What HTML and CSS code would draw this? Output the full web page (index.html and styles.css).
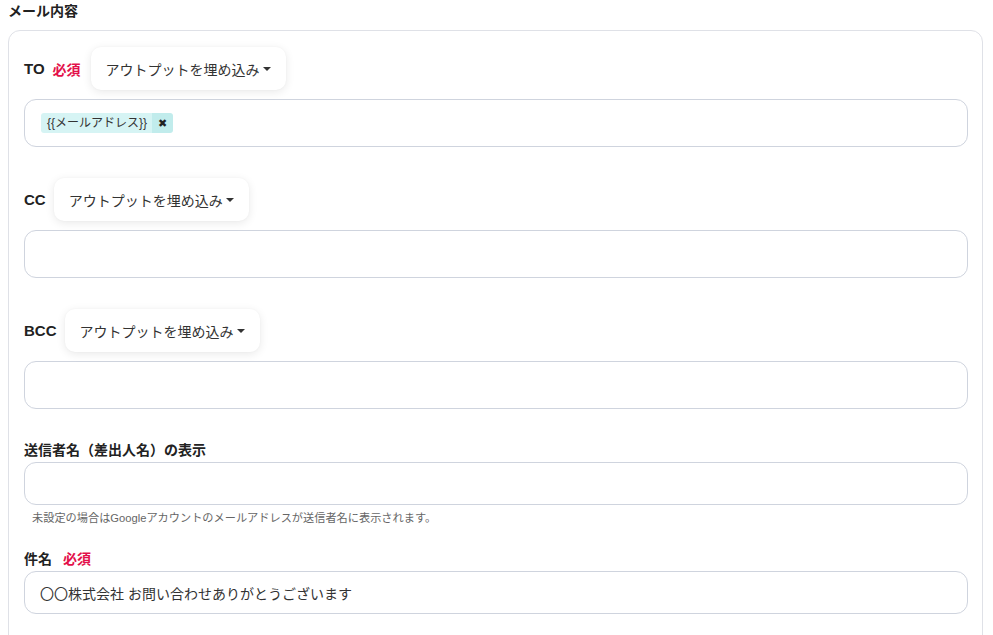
FILE: index.html
```html
<!DOCTYPE html>
<html lang="ja">
<head>
<meta charset="utf-8">
<link rel="stylesheet" href="styles.css">
</head>
<body>
<div class="page">
  <h2 class="section-title">メール内容</h2>
  <div class="card">
    <div class="field">
      <div class="field-head">
        <span class="label">TO</span>
        <span class="required">必須</span>
        <button class="embed-btn">アウトプットを埋め込み<span class="caret"></span></button>
      </div>
      <div class="input input-tags">
        <span class="tag"><span class="tag-text">{{メールアドレス}}</span><span class="tag-x">✖</span></span>
      </div>
    </div>
    <div class="field">
      <div class="field-head">
        <span class="label">CC</span>
        <button class="embed-btn">アウトプットを埋め込み<span class="caret"></span></button>
      </div>
      <div class="input input-tags"></div>
    </div>
    <div class="field">
      <div class="field-head">
        <span class="label">BCC</span>
        <button class="embed-btn">アウトプットを埋め込み<span class="caret"></span></button>
      </div>
      <div class="input input-tags"></div>
    </div>
    <div class="field-plain">
      <div class="plain-label">送信者名（差出人名）の表示</div>
      <div class="input input-text"></div>
      <div class="help">未設定の場合はGoogleアカウントのメールアドレスが送信者名に表示されます。</div>
    </div>
    <div class="field-plain subject">
      <div class="plain-label">件名<span class="required req-wide">必須</span></div>
      <div class="input input-text">〇〇株式会社 お問い合わせありがとうございます</div>
    </div>
  </div>
</div>
</body>
</html>
```

FILE: styles.css
```css
* { box-sizing: border-box; }
html, body { margin: 0; padding: 0; background: #fff; }
body {
  font-family: "Liberation Sans", "Noto Sans CJK JP", sans-serif;
  color: #2b2b2b;
}
.page { padding: 0 10px 0 8px; }
.section-title {
  margin: 0 0 8px;
  font-size: 14px;
  line-height: 22px;
  font-weight: bold;
  color: #222;
}
.card {
  border: 1px solid #dfe1e7;
  border-radius: 12px;
  padding: 16px 14px 30px 15px;
  height: 620px;
}
.field { margin-bottom: 31px; }
.field-head {
  display: flex;
  align-items: center;
  gap: 8px;
  height: 43px;
  margin-bottom: 9px;
}
.label {
  font-size: 15px;
  font-weight: bold;
  color: #222;
}
.required {
  font-size: 14px;
  font-weight: bold;
  color: #e3104a;
  margin-right: 2px;
}
.embed-btn {
  display: inline-flex;
  align-items: center;
  height: 43px;
  padding: 0 15px;
  border: none;
  border-radius: 10px;
  background: #fff;
  box-shadow: 0 2px 10px rgba(0, 0, 0, 0.09), 0 0 2px rgba(0, 0, 0, 0.04);
  font-family: inherit;
  font-size: 14px;
  color: #333;
}
.caret {
  width: 0;
  height: 0;
  margin-left: 3px;
  border-left: 4px solid transparent;
  border-right: 4px solid transparent;
  border-top: 4px solid #333;
}
.input {
  border: 1px solid #cfd4de;
  border-radius: 12px;
  background: #fff;
}
.input-tags {
  height: 48px;
  padding: 13px 16px;
  display: flex;
  align-items: flex-start;
}
.tag {
  display: inline-flex;
  height: 20px;
  border-radius: 3px;
  overflow: hidden;
  font-size: 12px;
  line-height: 20px;
  color: #333;
}
.tag-text {
  background: #d6f4f4;
  padding: 0 5px 0 6px;
}
.tag-x {
  background: #c1ecec;
  width: 21px;
  text-align: center;
  font-size: 11px;
  color: #222;
}
.field-plain .plain-label {
  font-size: 14px;
  font-weight: bold;
  line-height: 21px;
  color: #222;
  margin-bottom: 1px;
}
.input-text {
  height: 43px;
  padding: 0 15px;
  display: flex;
  align-items: center;
  font-size: 14px;
  color: #333;
}
.help {
  padding-left: 8px;
  margin-top: 5px;
  font-size: 11.2px;
  line-height: 16px;
  color: #666;
}
.subject { margin-top: 23px; }
.subject .plain-label { margin-bottom: 1px; }
.req-wide { margin-left: 11px; }
```
